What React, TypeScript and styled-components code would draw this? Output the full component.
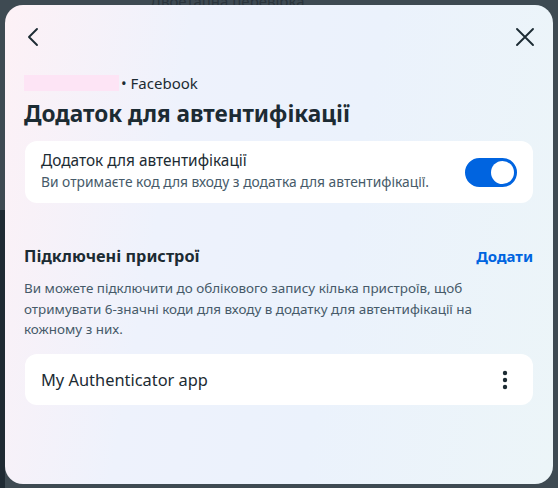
import React, { useState } from "react";
import styled, { createGlobalStyle } from "styled-components";

const GlobalStyle = createGlobalStyle`
  html, body {
    margin: 0;
    padding: 0;
  }
  body {
    font-family: "Noto Sans", "Open Sans", sans-serif;
    color: #1c2b33;
  }
`;

const Backdrop = styled.div`
  width: 558px;
  height: 488px;
  box-sizing: border-box;
  padding: 5px 5px 4px 5px;
  background:
    linear-gradient(to right, #1f2a33 0, #1f2a33 5px, transparent 5px) left bottom / 100% 57% no-repeat,
    #3e4a52;
  position: relative;
  overflow: hidden;
`;

const BehindText = styled.div`
  position: absolute;
  top: -9px;
  left: 150px;
  font-size: 15px;
  color: #2a343b;
`;

const Modal = styled.div`
  position: relative;
  height: 100%;
  box-sizing: border-box;
  border-radius: 18px;
  background: linear-gradient(100deg, #fdf1f6 0%, #eef2fc 30%, #ebf2fc 60%, #ecf5f8 100%);
  padding: 20px 20px 0 19px;
  display: flex;
  flex-direction: column;
`;

const TopBar = styled.div`
  display: flex;
  justify-content: space-between;
  align-items: center;
  height: 24px;
  margin: 0 -4px 0 0;
`;

const IconButton = styled.button`
  border: none;
  background: none;
  padding: 0;
  width: 24px;
  height: 24px;
  display: flex;
  align-items: center;
  justify-content: center;
  cursor: pointer;
  color: #1c2b33;
`;

const Account = styled.div`
  margin-top: 24px;
  display: flex;
  align-items: center;
  font-size: 15px;
  line-height: 20px;
  color: #1c2b33;
`;

const Redacted = styled.span`
  display: inline-block;
  width: 95px;
  height: 16px;
  background: #fde4f5;
  margin-right: 2px;
`;

const Title = styled.h1`
  margin: 6px 0 0 0;
  font-size: 22.6px;
  line-height: 30px;
  font-weight: 700;
  color: #1c2b33;
`;

const Card = styled.div<{ $tall?: boolean }>`
  background: #fff;
  border-radius: 12px;
  margin-left: 1px;
  display: flex;
  align-items: center;
  justify-content: space-between;
  padding: ${(p) => (p.$tall ? "10px 16px 9px 16px" : "10px 16px 10px 16px")};
`;

const CardTitle = styled.div`
  font-size: 15.4px;
  line-height: 20px;
  color: #1c2b33;
`;

const CardSub = styled.div`
  font-size: 13.8px;
  line-height: 22px;
  color: #465a69;
`;

const Switch = styled.button<{ $on: boolean }>`
  width: 52px;
  height: 29px;
  border-radius: 15px;
  border: 2px solid #0064e0;
  background: ${(p) => (p.$on ? "#0064e0" : "#ffffff")};
  padding: 0;
  position: relative;
  cursor: pointer;
  flex-shrink: 0;
`;

const Knob = styled.span<{ $on: boolean }>`
  position: absolute;
  top: 1px;
  left: ${(p) => (p.$on ? "24px" : "1px")};
  width: 23px;
  height: 23px;
  border-radius: 50%;
  background: #fff;
`;

const SectionHead = styled.div`
  margin-top: 42px;
  display: flex;
  justify-content: space-between;
  align-items: center;
`;

const SectionTitle = styled.h2`
  margin: 0;
  font-size: 16.3px;
  line-height: 22px;
  font-weight: 700;
  color: #1c2b33;
`;

const LinkButton = styled.button`
  border: none;
  background: none;
  padding: 0;
  font-family: inherit;
  font-size: 15px;
  font-weight: 700;
  color: #0064e0;
  cursor: pointer;
`;

const Description = styled.p`
  margin: 11px 0 14px 0;
  max-width: 470px;
  font-size: 13.45px;
  line-height: 20.5px;
  color: #465a69;
`;

const DeviceName = styled.div`
  font-size: 16.4px;
  line-height: 32px;
  color: #1c2b33;
`;

export default function App() {
  const [on, setOn] = useState(true);

  return (
    <>
      <GlobalStyle />
      <Backdrop>
        <BehindText>Двоетапна перевірка</BehindText>
        <Modal>
          <TopBar>
            <IconButton aria-label="Назад">
              <svg width="20" height="20" viewBox="0 0 20 20" fill="none">
                <path d="M11 2 L3 10 L11 18" stroke="currentColor" strokeWidth="1.9" strokeLinecap="round" strokeLinejoin="round" />
              </svg>
            </IconButton>
            <IconButton aria-label="Закрити">
              <svg width="20" height="20" viewBox="0 0 20 20" fill="none">
                <path d="M2 2 L18 18 M18 2 L2 18" stroke="currentColor" strokeWidth="1.9" strokeLinecap="round" />
              </svg>
            </IconButton>
          </TopBar>

          <Account>
            <Redacted />• Facebook
          </Account>
          <Title>Додаток для автентифікації</Title>

          <Card style={{ marginTop: 12 }}>
            <div>
              <CardTitle>Додаток для автентифікації</CardTitle>
              <CardSub>Ви отримаєте код для входу з додатка для автентифікації.</CardSub>
            </div>
            <Switch $on={on} onClick={() => setOn(!on)} aria-label="Увімкнути">
              <Knob $on={on} />
            </Switch>
          </Card>

          <SectionHead>
            <SectionTitle>Підключені пристрої</SectionTitle>
            <LinkButton>Додати</LinkButton>
          </SectionHead>
          <Description>
            Ви можете підключити до облікового запису кілька пристроїв, щоб отримувати 6-значні коди для входу в додатку для автентифікації на кожному з них.
          </Description>

          <Card $tall>
            <DeviceName>My Authenticator app</DeviceName>
            <IconButton aria-label="Більше">
              <svg width="6" height="20" viewBox="0 0 6 20">
                <circle cx="3" cy="3" r="2.2" fill="currentColor" />
                <circle cx="3" cy="10" r="2.2" fill="currentColor" />
                <circle cx="3" cy="17" r="2.2" fill="currentColor" />
              </svg>
            </IconButton>
          </Card>
        </Modal>
      </Backdrop>
    </>
  );
}
